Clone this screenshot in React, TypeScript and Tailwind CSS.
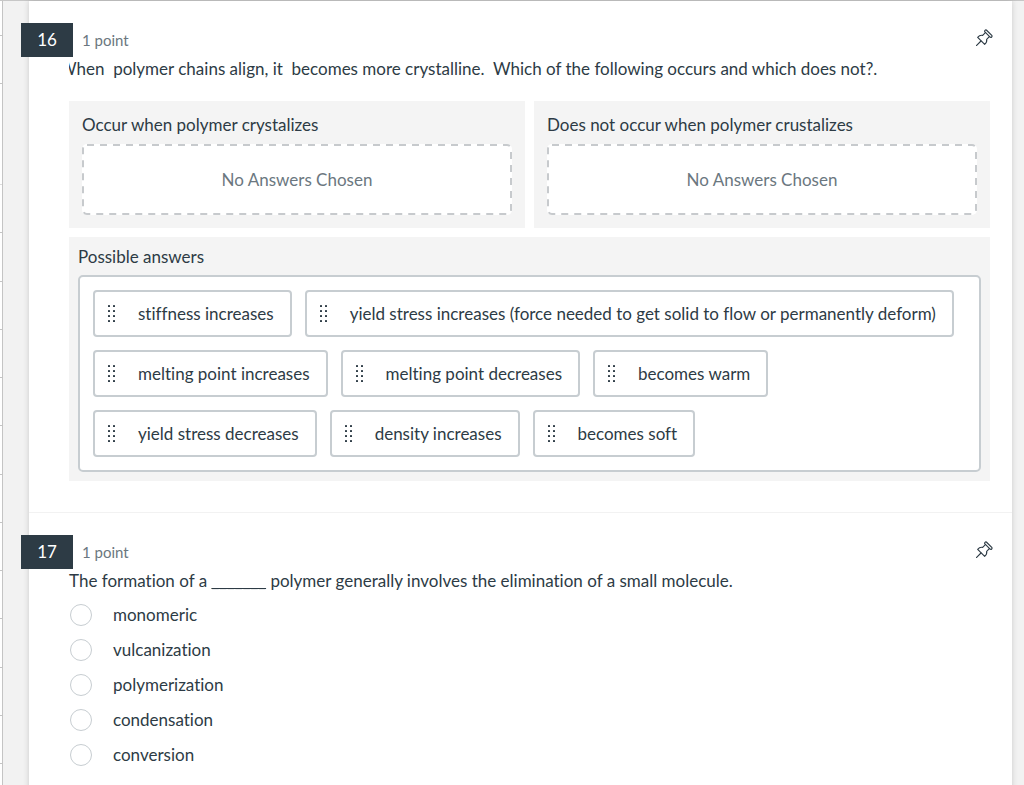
import type { ReactNode } from "react";

const answers = [
  "stiffness increases",
  "yield stress increases (force needed to get solid to flow or permanently deform)",
  "melting point increases",
  "melting point decreases",
  "becomes warm",
  "yield stress decreases",
  "density increases",
  "becomes soft",
];

const options = ["monomeric", "vulcanization", "polymerization", "condensation", "conversion"];

const PinIcon = () => (
  <svg viewBox="0 0 51 51" className="size-[17px]" fill="none" stroke="#2d3b45" strokeWidth="3.4" strokeLinejoin="round" strokeLinecap="round">
    <path d="M31 3 48 20c1 3-2 6-5 5L26 8c-1-3 2-6 5-5Z" />
    <path d="M28 11 20 19C15 18 9 20 5 25L26 46C31 42 33 36 32 31L40 23" />
    <path d="M15 36 1 50" />
  </svg>
);

const DragHandle = () => (
  <svg viewBox="0 0 8 17" className="h-[17px] w-2 shrink-0" fill="#2d3b45">
    {[1, 6, 11, 16].map((y) => (
      <g key={y}>
        <rect x="0" y={y - 1} width="2" height="2" rx="0.6" />
        <rect x="5" y={y - 1} width="2" height="2" rx="0.6" />
      </g>
    ))}
  </svg>
);

const Question = ({ number, children }: { number: number; children: ReactNode }) => (
  <section className="border-b border-[#f2f2f2] pt-[22px] pb-[31px]">
    <header className="-ml-2 flex items-center pr-[19px]">
      <h2 className="flex h-[34px] w-[52px] items-center justify-center bg-[#2d3b45] text-white">{number}</h2>
      <span className="ml-[9px] text-[15px] text-[#6b7780]">1 point</span>
      <button type="button" aria-label={`Pin question ${number}`} className="mb-[5px] ml-auto">
        <PinIcon />
      </button>
    </header>
    <div className="pr-[22px] pl-10">{children}</div>
  </section>
);

const DropZone = ({ title }: { title: string }) => (
  <div className="flex-1 bg-[#f4f4f4] p-[13px]">
    <h3 className="leading-[22px]">{title}</h3>
    <div className="relative mt-2 flex h-[71px] items-center justify-center rounded-[5px] bg-white text-[#6b7780]">
      No Answers Chosen
      <svg className="absolute inset-0 size-full overflow-visible p-px" fill="none" stroke="#c7cacd" strokeWidth="2" aria-hidden="true">
        <rect width="100%" height="100%" rx="4" strokeDasharray="7 6" />
      </svg>
    </div>
  </div>
);

export default function App() {
  return (
    <div className="flex min-h-screen border-t border-[#c7c7c7] bg-[#f2f2f2] font-['Lato',sans-serif] text-[17px] text-[#2d3b45] [font-variant-ligatures:none]">
      <aside className="w-[3px] border-r border-[#c4c4c4] bg-white">
        <div className="h-[35px] border-b border-[#c4c4c4]" />
        <div className="h-12 border-b border-[#c4c4c4]" />
        <div className="h-[101px] border-b border-[#dcdcdc]" />
        <div className="flex h-[579px] flex-col">
          {Array.from({ length: 12 }, (_, i) => (
            <div key={i} className="flex-1 border-b border-[#c4c4c4]" />
          ))}
        </div>
      </aside>

      <main className="mr-3 ml-[26px] flex-1 bg-white shadow-[0_0_6px_rgba(0,0,0,0.16)]">
        <Question number={16}>
          <p className="overflow-hidden -indent-[10px] leading-6 whitespace-pre-wrap">
            {"When  polymer chains align, it  becomes more crystalline.  Which of the following occurs and which does not?."}
          </p>
          <div className="mt-5 flex gap-[9px]">
            <DropZone title="Occur when polymer crystalizes" />
            <DropZone title="Does not occur when polymer crustalizes" />
          </div>
          <div className="mt-[9px] bg-[#f4f4f4] p-[9px]">
            <h3 className="leading-[22px]">Possible answers</h3>
            <ul className="mt-[7px] flex flex-wrap gap-[13px] rounded-[5px] border-2 border-[#c7cdd1] bg-white p-[13px]">
              {answers.map((answer) => (
                <li key={answer}>
                  <button type="button" className="flex h-[47px] items-center gap-[22px] rounded-[4px] border-2 border-[#c7cdd1] bg-white pr-4 pl-[13px]">
                    <DragHandle />
                    {answer}
                  </button>
                </li>
              ))}
            </ul>
          </div>
        </Question>

        <Question number={17}>
          <p className="leading-6">
            The formation of a <span className="underline decoration-1 underline-offset-1 [text-decoration-skip-ink:none]">_______</span> polymer generally involves the elimination of a small molecule.
          </p>
          <div className="mt-[11px] flex flex-col gap-[13px]">
            {options.map((option) => (
              <label key={option} className="flex items-center gap-[21px] leading-[22px]">
                <input type="radio" name="q17" className="ml-px size-[22px] appearance-none rounded-full border border-[#c7cdd1] bg-white" />
                {option}
              </label>
            ))}
          </div>
        </Question>
      </main>
    </div>
  );
}
